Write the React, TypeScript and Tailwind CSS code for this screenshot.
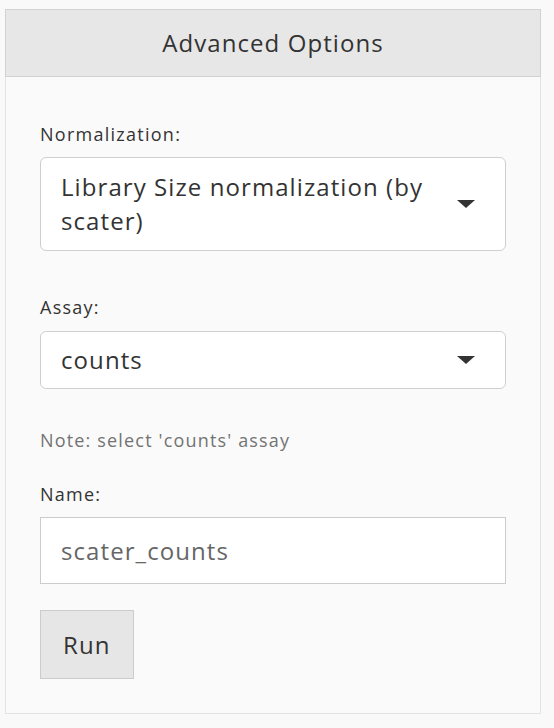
import { useState } from 'react';

const Caret = () => (
    <span className="block w-0 h-0 border-l-[9px] border-r-[9px] border-t-[8px] border-l-transparent border-r-transparent border-t-[#333333]" />
);

interface SelectBoxProps {
    value: string;
    lineClass: string;
}

const SelectBox = ({ value, lineClass }: SelectBoxProps) => (
    <div className="flex items-center bg-white border border-[#cfcfcf] rounded-[6px] pl-[20px] pr-[30px] cursor-pointer">
        <div className={`flex-1 text-[24px] tracking-[0.045em] text-[#333333] pr-[20px] ${lineClass}`}>{value}</div>
        <Caret />
    </div>
);

const App = () => {
    const [name, setName] = useState('scater_counts');

    return (
        <div className="min-h-[728px] w-full bg-[#f9f9f9] pt-[9px] pl-[5px]" style={{ fontFamily: '"Open Sans", "Noto Sans", sans-serif' }}>
            <div className="w-[536px]">
                <div className="bg-[#e7e7e7] border border-[#d2d2d2] py-[16px] text-center text-[24px] leading-[34px] tracking-[0.045em] text-[#333333]">
                    Advanced Options
                </div>
                <div className="bg-[#fafafa] border-x border-b border-[#e3e3e3] px-[34px] pt-[44px] pb-[34px]">
                    <label className="block text-[18px] leading-[26px] tracking-[0.07em] text-[#333333] mb-[10px]">Normalization:</label>
                    <SelectBox value="Library Size normalization (by scater)" lineClass="py-[12px] leading-[34px]" />

                    <label className="block text-[18px] leading-[26px] tracking-[0.07em] text-[#333333] mt-[43px] mb-[11px]">Assay:</label>
                    <SelectBox value="counts" lineClass="py-[12px] leading-[32px]" />

                    <p className="text-[18px] leading-[26px] tracking-[0.065em] text-[#737373] mt-[38px]">Note: select 'counts' assay</p>

                    <label className="block text-[18px] leading-[26px] tracking-[0.07em] text-[#333333] mt-[28px] mb-[10px]">Name:</label>
                    <input
                        type="text"
                        value={name}
                        onChange={(e) => setName(e.target.value)}
                        className="block w-full bg-white border border-[#cccccc] px-[20px] py-[15.5px] text-[24px] leading-[34px] tracking-[0.045em] text-[#666666] focus:outline-none"
                    />

                    <button className="mt-[26px] bg-[#e6e6e6] border border-[#cccccc] px-[22px] py-[16.5px] text-[24px] leading-[34px] tracking-[0.045em] text-[#333333]">
                        Run
                    </button>
                </div>
            </div>
        </div>
    );
};

export default App;
